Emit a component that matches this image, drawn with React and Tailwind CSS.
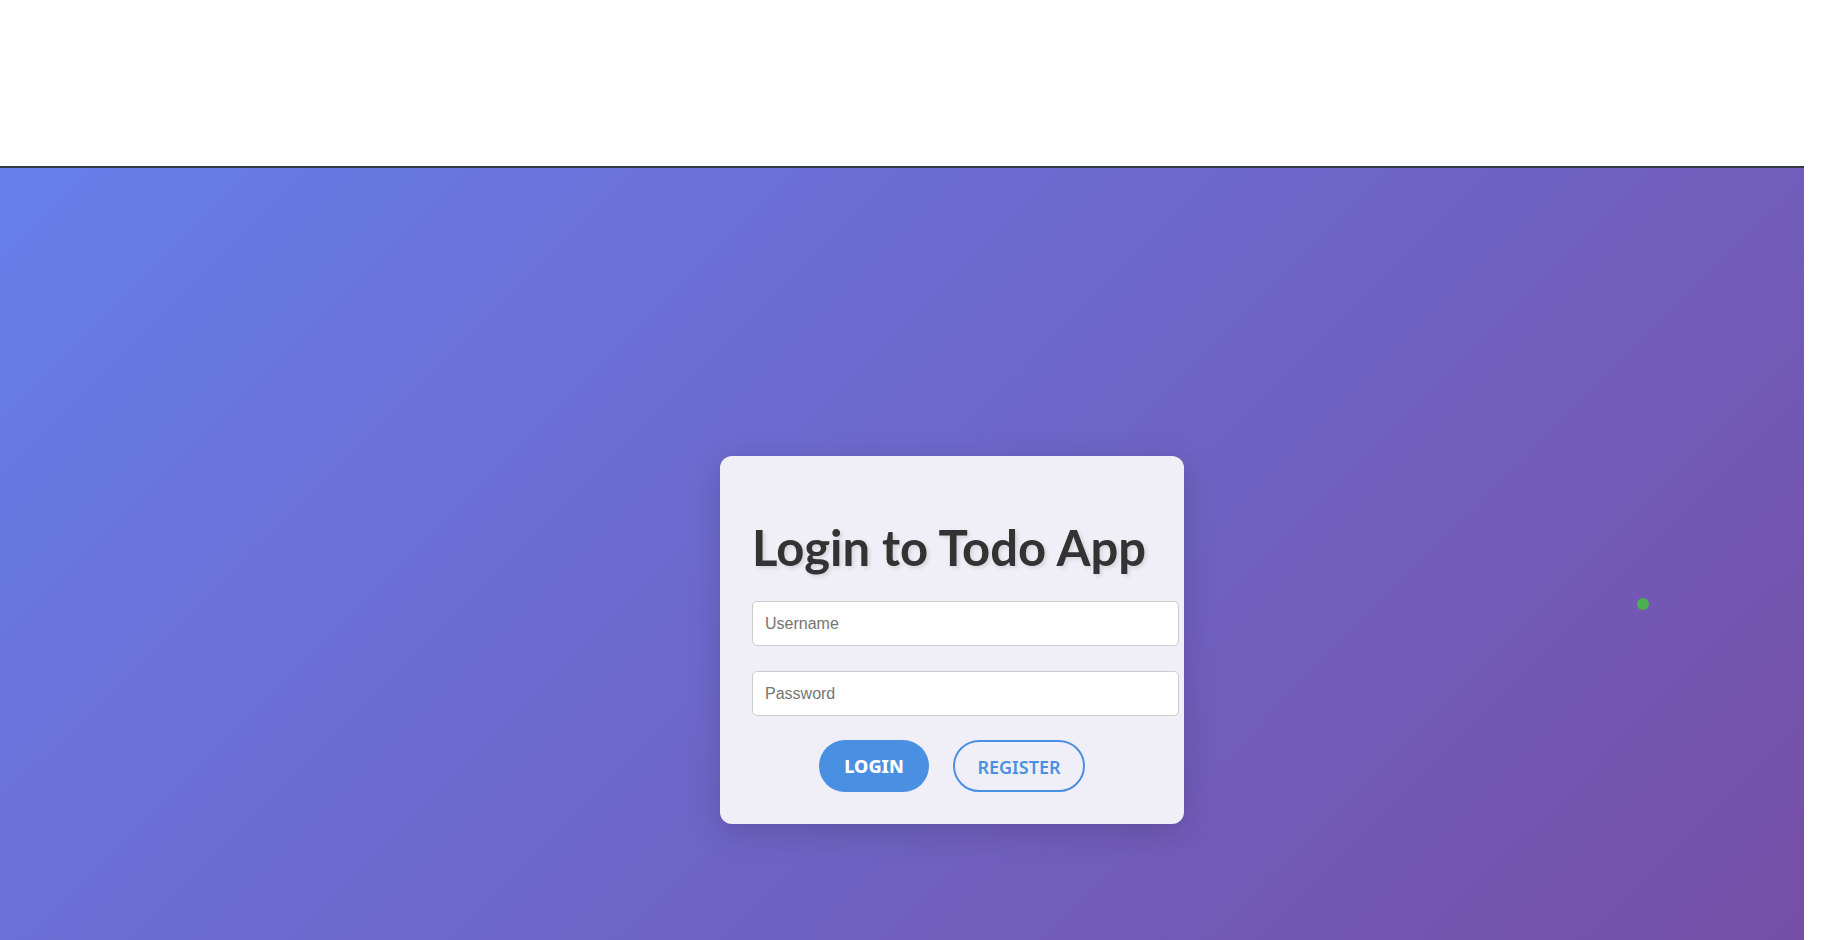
import React, { useState } from 'react';

export default function App() {
    const [username, setUsername] = useState('');
    const [password, setPassword] = useState('');

    return (
        <div className="bg-white min-w-[1846px]">
            <header className="w-[1804px] h-[168px] bg-white border-b-2 border-[#333a42]" />

            <main className="relative w-[1804px] h-[940px] bg-[linear-gradient(135deg,#667eea_0%,#764ba2_100%)] flex items-center justify-center pl-[100px] pt-[4px]">
                <div className="w-[464px] p-8 rounded-xl bg-[#f0eff8] shadow-[0_8px_32px_rgba(0,0,0,0.15)]">
                    <h1 className="mt-[27px] text-[49px] leading-[65px] font-bold text-[#333] whitespace-nowrap font-['Lato',sans-serif] [text-shadow:2px_2px_4px_rgba(0,0,0,0.12)]">
                        Login to Todo App
                    </h1>

                    <input
                        type="text"
                        placeholder="Username"
                        value={username}
                        onChange={(e) => setUsername(e.target.value)}
                        className="mt-[21px] block w-[427px] h-[45px] px-3 border border-[#ccc] rounded-[5px] bg-white text-base text-[#333] placeholder:text-[#757575] outline-none font-['Liberation_Sans',Arial,sans-serif]"
                    />
                    <input
                        type="password"
                        placeholder="Password"
                        value={password}
                        onChange={(e) => setPassword(e.target.value)}
                        className="mt-[25px] block w-[427px] h-[45px] px-3 border border-[#ccc] rounded-[5px] bg-white text-base text-[#333] placeholder:text-[#757575] outline-none font-['Liberation_Sans',Arial,sans-serif]"
                    />

                    <div className="mt-6 flex justify-center gap-6">
                        <button className="w-[110px] h-[52px] rounded-full bg-[#4a90e2] text-white text-[18px] font-extrabold font-['Noto_Sans',sans-serif]">
                            LOGIN
                        </button>
                        <button className="w-[132px] h-[52px] rounded-full border-2 border-[#4a90e2] bg-transparent text-[#4a90e2] text-[18px] font-semibold pt-[2px] font-['Noto_Sans',sans-serif]">
                            REGISTER
                        </button>
                    </div>
                </div>

                <span className="absolute left-[1637px] top-[430px] w-3 h-3 rounded-full bg-[#4caf50]" />
            </main>
        </div>
    );
}
